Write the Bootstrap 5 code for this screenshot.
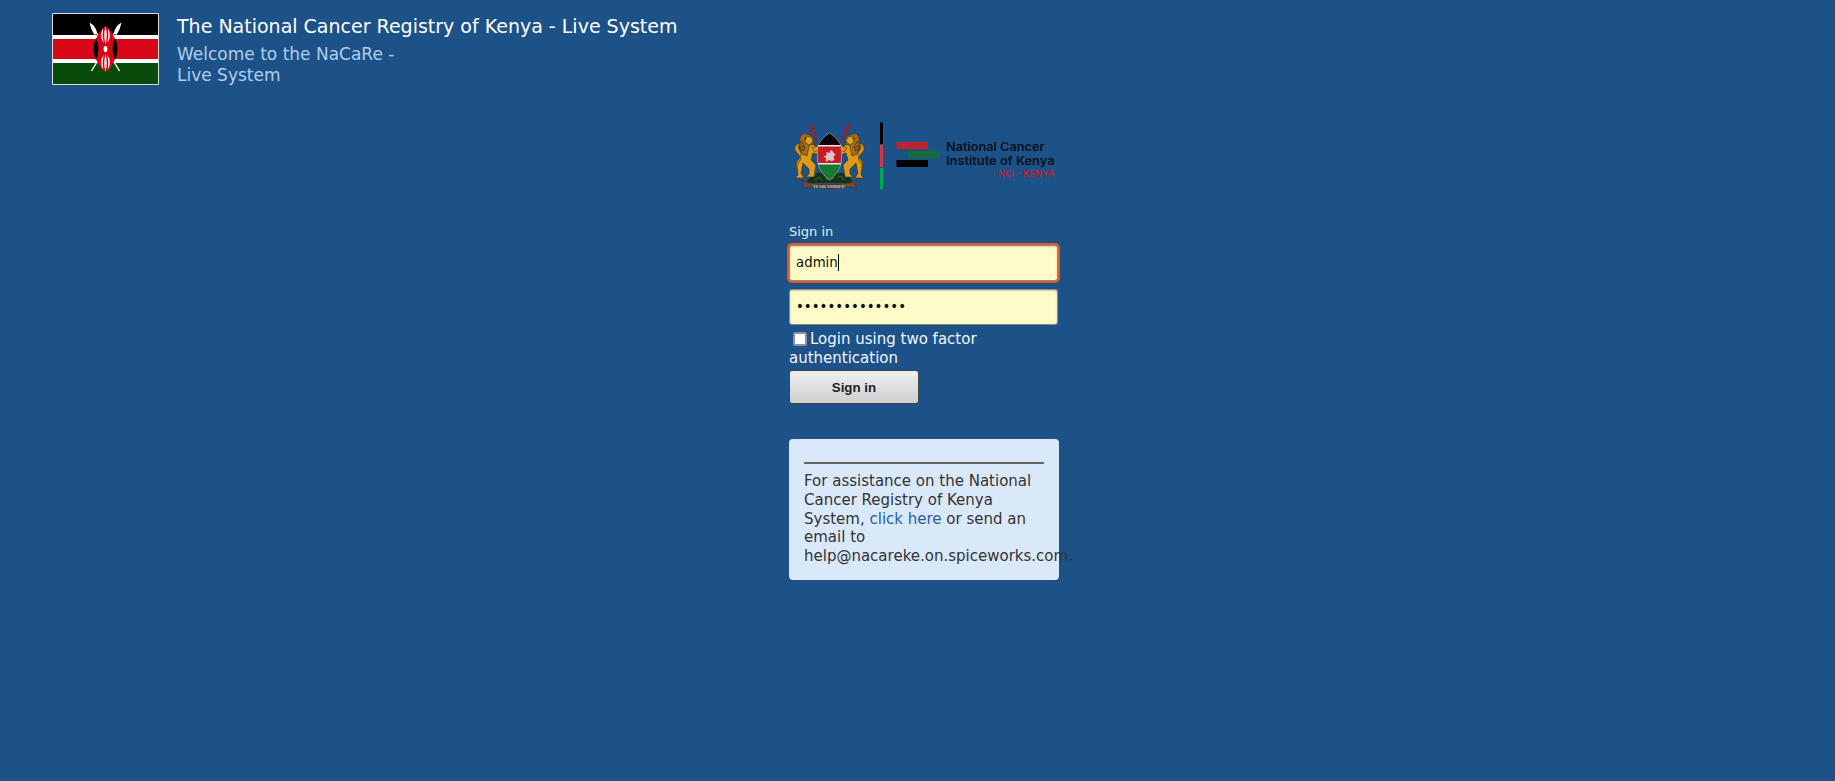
<!DOCTYPE html>
<html lang="en">
<head>
<meta charset="utf-8">
<meta name="viewport" content="width=device-width, initial-scale=1">
<title>The National Cancer Registry of Kenya - Live System</title>
<link href="https://cdn.jsdelivr.net/npm/bootstrap@5.3.0/dist/css/bootstrap.min.css" rel="stylesheet">
<style>
  body { background: #1d5288; font: 15px/18.67px "DejaVu Sans", sans-serif; color: #f0f6ff; }
  .site-header { height: 98px; padding: 13px 0 0 52px; gap: 18px; }
  .flag { width: 107px; height: 72px; }
  .site-title { font-size: 19px; line-height: 24px; color: #fff; margin: 1px 0 6px; }
  .intro { font-size: 17px; line-height: 21px; color: #b0cfeb; width: 230px; }
  .login-col { width: 270px; margin-left: 789px; }
  .logo { width: 270px; height: 90px; margin-top: 12px; }
  .login-label { font-size: 13px; line-height: 16px; margin: 24px 0 5px; color: #e2eefa; }
  .login-field { width: 269px; height: 36px; padding: 0 6px 2px; border: 1px solid #8c8c84; border-radius: 3px; background: #fffbc8; color: #111; font: 13.33px "DejaVu Sans", sans-serif; box-shadow: inset 0 1px 2px #d4d0a8; outline: 0; }
  .login-field.active-field { box-shadow: 0 0 0 2px #e95420, inset 0 1px 2px #d4d0a8; }
  .text-caret { left: 49px; top: 9px; width: 1px; height: 17px; background: #000; }
  .two-factor { margin-top: 5px; }
  .box-check { width: 14px; height: 14px; margin: 0 3px 0 4px; vertical-align: -2px; appearance: none; background: #fff; border: 2px solid #8f8f9d; border-radius: 2px; }
  .signin-btn { width: 130px; height: 34px; margin-top: 3px; border: 1px solid #444; border-radius: 3px; background: linear-gradient(#efefef, #cfcfcf); color: #222; font: bold 13.33px "Liberation Sans", sans-serif; }
  .help-box { width: 270px; height: 141px; margin-top: 35px; padding: 23px 15px 0; border-radius: 4px; background: #dae9f9; color: #333; }
  .help-box hr { height: 2px; margin: 0 0 8px; border: 0; background: #666; opacity: 1; }
  .help-box a { color: #2a5f9e; }
</style>
</head>
<body>
<header class="site-header d-flex align-items-start">
  <svg class="flag flex-shrink-0" viewBox="0 0 107 72">
    <rect width="107" height="72" rx="1" fill="#ddd"/>
    <path fill="#000" d="M1 1h105v21H1z"/>
    <path fill="#fff" d="M1 22h105v28H1z"/>
    <path fill="#d80718" d="M1 26h105v20H1z"/>
    <path fill="#094b09" d="M1 50h105v21H1z"/>
    <path stroke="#fff" stroke-width="1.4" d="M66 14 39.500 58M41 14l26.500 44" fill="none"/>
    <path fill="#fff" d="M37.500 9.500q7 4 7.500 11l-2.500 1.500q-4-6-5-12.500zM69.500 9.500q-7 4-7.500 11l2.500 1.500q4-6 5-12.500z"/>
    <path fill="#d80718" d="M53.500 13C47 17 43 26 41.500 36 43 46 47 55 53.500 59 60 55 64 46 65.500 36 64 26 60 17 53.500 13z"/>
    <path fill="#000" d="M44 25q5 11 0 22-5-11 0-22zM63 25q-5 11 0 22 5-11 0-22z"/>
    <ellipse cx="53.500" cy="36" rx="1.900" ry="3.100" fill="#fff"/>
    <g fill="#fff">
      <path id="stripes" d="M53.500 13.500q2.400 8.500 0 17.500-2.400-9 0-17.500zM51 15.500q-1 7.500.6 14.500-4.600-7-.6-14.500zM56 15.500q1 7.500-.6 14.500 4.600-7 .6-14.500z"/>
      <use href="#stripes" transform="matrix(1 0 0 -1 0 72)"/>
    </g>
  </svg>
  <div>
    <h1 class="site-title fw-normal">The National Cancer Registry of Kenya - Live System</h1>
    <div class="intro">Welcome to the NaCaRe - Live System</div>
  </div>
</header>
<main class="login-col">
  <svg class="logo d-block" viewBox="789 110 270 90">
    <g id="arms">
      <path d="M809 123l24 52M850 123l-24 52" stroke="#7d2832" stroke-width="1.300"/>
      <path d="M809 122.500q5 4 6 10l2 5-3-1-3-5q-2-5-2-9zM850 122.500q-5 4-6 10l-2 5 3-1 3-5q2-5 2-9z" fill="#8f2432"/>
      <path d="M806 183q4-8 9-7 2-5 6-3l5-3h8l5 4q5-3 7 2 4 0 7 7z" fill="#123316"/>
      <path d="M815 180l4-3 3 3M837 178l4-2 3 4M825 178l4 2 5-2" stroke="#42711c" fill="none"/>
      <g id="lion" stroke="#3a2a10" stroke-width=".6" stroke-linejoin="round">
        <path d="M803 171q-6 0-7-5 0-5 3-7 2-3-2-6-4-4-1-8 2-2 4-1-3 3 0 7 5 5 2 9-3 3-1 5z" fill="#d59313"/>
        <path d="M803 143q5-3 12 3l6 5-1 4-7-2-2 7 5 5-2 12h-8l3-3v-5l-6-6-2 10 3 5h-9l3-3-1-10q5-5 4-11-1-7 2-12z" fill="#dd9b17"/>
        <path d="M812 148l8-3 1 3-6 4z" fill="#dd9b17"/>
        <path d="M800 138q2-6 7-4l5 2 2 4-1 4-4 2-2 10-5-2q-3-7-2-16z" fill="#a86d14"/>
        <path d="M806 136l5 1 2 4-4 4-4-3z" fill="#dda329"/>
        <path d="M801 141l3 4M801 146l4 1M804 139l3-1M803 151l2-4M802 149l2 2" stroke="#3f270b" stroke-width=".9"/>
      </g>
      <use href="#lion" transform="matrix(-1 0 0 1 1659 0)"/>
      <clipPath id="shield"><path d="M829.500 133q8 5 11.500 12.500 1.500 9 0 18.500-3 10-11.500 16-8.500-6-11.500-16-1.500-9.500 0-18.500 3.500-7.500 11.500-12.500z"/></clipPath>
      <g clip-path="url(#shield)">
        <path d="M817 132h26v13h-26z" fill="#050505"/><path d="M817 145h26v20h-26z" fill="#f3e5e7"/><path d="M817 146.500h26V163h-26z" fill="#c51b2b"/><path d="M817 164.500h26v16h-26z" fill="#147a30"/>
      </g>
      <path d="M829.500 133q8 5 11.500 12.500 1.500 9 0 18.500-3 10-11.500 16-8.500-6-11.500-16-1.500-9.500 0-18.500 3.500-7.500 11.500-12.500z" fill="none" stroke="#a0a4a5" stroke-width=".7"/>
      <path d="M823.500 157l3-2v-3l3 1 1-3 2 1 1 2 2 1-2 3 1 3-3 1-3-1-2 2-1-2 1-2z" fill="#e0c3c6"/>
      <path d="M801 180l9 3q19 4 39 0l9-3-3 4 2 4-8-1q-19 3-39 0l-8 1 2-4z" fill="#704b33" stroke="#382414" stroke-width=".5"/>
      <text x="813.500" y="188" font-family="Liberation Serif, serif" font-size="5" font-weight="bold" fill="#c6b49b" textLength="32" lengthAdjust="spacingAndGlyphs">HARAMBEE</text>
    </g>
    <path fill="#000" d="M880 122.500h3V144h-3zM896.500 160H928v7h-31.500z"/>
    <path fill="#d63642" d="M880 145h3v22h-3z"/><path fill="#00a651" d="M880 168h3v21.500h-3z"/>
    <path fill="#bd242c" d="M896.500 142H928v7h-31.500z"/><path fill="#176c39" d="M908 151h32v7h-32z"/>
    <g font-family="Inter, sans-serif" font-weight="600" fill="#071019">
      <text x="946" y="150.500" font-size="11.500" textLength="98.500" lengthAdjust="spacingAndGlyphs">National Cancer</text>
      <text x="946" y="165" font-size="11.500" textLength="108.500" lengthAdjust="spacingAndGlyphs">Institute of Kenya</text>
      <text x="998" y="177.300" font-size="8.800" fill="#b3263a" textLength="56.500" lengthAdjust="spacingAndGlyphs">NCI - KENYA</text>
    </g>
  </svg>
  <form>
    <div class="login-label">Sign in</div>
    <div class="position-relative mb-2">
      <input class="login-field active-field d-block" type="text" value="admin" aria-label="Username">
      <span class="text-caret position-absolute"></span>
    </div>
    <input class="login-field d-block" type="password" value="abcdefghijklmn" aria-label="Password">
    <div class="two-factor"><input id="twofa" class="box-check" type="checkbox"><label class="d-inline" for="twofa">Login using two factor authentication</label></div>
    <button class="signin-btn d-block" type="button">Sign in</button>
  </form>
  <section class="help-box">
    <hr>
    For assistance on the National Cancer Registry of Kenya System, <a class="text-decoration-none" href="#">click here</a> or send an email to help@nacareke.on.spiceworks.com.
  </section>
</main>
</body>
</html>
